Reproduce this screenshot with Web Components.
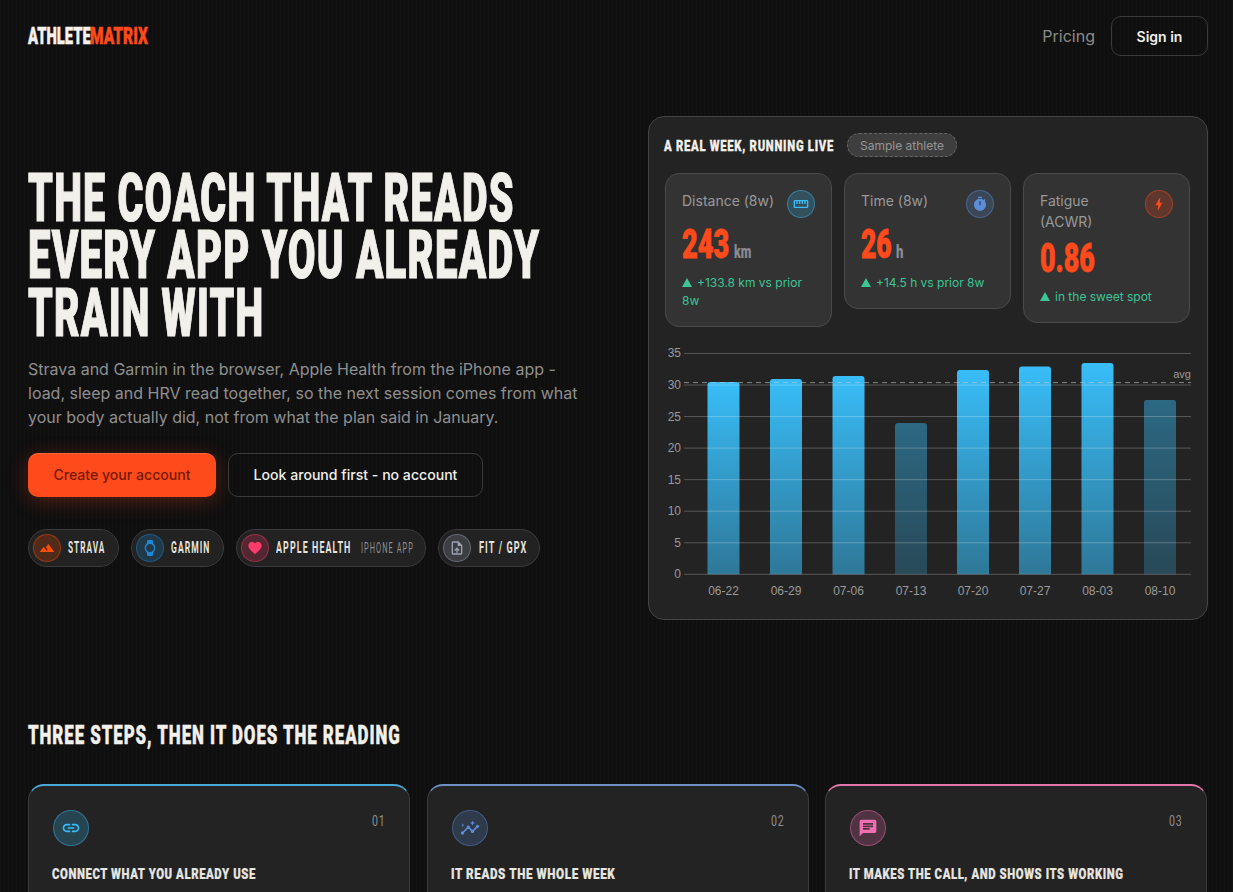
<!DOCTYPE html>
<html lang="en">
<head>
<meta charset="utf-8">
<title>AthleteMatrix</title>
<style>
html, body { margin: 0; height: 892px; overflow: hidden; }
body {
    background-color: #0f0f0f;
    background-image: repeating-linear-gradient(90deg, rgba(255,255,255,.014) 0 1px, transparent 1px 4px);
    color: #f2f0eb;
    font-family: Inter, "Liberation Sans", sans-serif;
    --display: Roboto, "Liberation Sans", sans-serif;
}
</style>
</head>
<body>
<landing-page></landing-page>

<script>
const ICONS = {
    ruler: 'M21 6H3c-1.1 0-2 .9-2 2v8c0 1.1.9 2 2 2h18c1.1 0 2-.9 2-2V8c0-1.1-.9-2-2-2zm0 10H3V8h2v4h2V8h2v4h2V8h2v4h2V8h2v4h2V8h2v8z',
    timer: 'M9 1h6v2H9zm10.03 6.39l1.42-1.42c-.43-.51-.9-.99-1.41-1.41l-1.42 1.42C16.07 4.74 14.12 4 12 4c-4.97 0-9 4.03-9 9s4.02 9 9 9 9-4.03 9-9c0-2.12-.74-4.07-1.97-5.61zM13 14h-2V8h2v6z',
    bolt: 'M11 21h-1l1-7H7.5c-.58 0-.57-.32-.38-.66.19-.34.05-.08.07-.12C8.48 10.94 10.42 7.54 13 3h1l-1 7h3.5c.49 0 .56.33.47.51l-.07.15C12.96 17.55 11 21 11 21z',
    link: 'M3.9 12c0-1.71 1.39-3.1 3.1-3.1h4V7H7c-2.76 0-5 2.24-5 5s2.24 5 5 5h4v-1.9H7c-1.71 0-3.1-1.39-3.1-3.1zM8 13h8v-2H8v2zm9-6h-4v1.9h4c1.71 0 3.1 1.39 3.1 3.1s-1.39 3.1-3.1 3.1h-4V17h4c2.76 0 5-2.24 5-5s-2.24-5-5-5z',
    insights: 'M21 8c-1.45 0-2.26 1.44-1.93 2.51l-3.55 3.56c-.3-.09-.74-.09-1.04 0l-2.55-2.55C12.27 10.45 11.46 9 10 9c-1.45 0-2.27 1.44-1.93 2.52l-4.56 4.55C2.44 15.74 1 16.55 1 18c0 1.1.9 2 2 2 1.45 0 2.26-1.44 1.93-2.51l4.55-4.56c.3.09.74.09 1.04 0l2.55 2.55C12.73 16.55 13.54 18 15 18c1.45 0 2.27-1.44 1.93-2.52l3.56-3.55C21.56 12.26 23 11.45 23 10c0-1.1-.9-2-2-2zM15 9l.94-2.07L18 6l-2.06-.93L15 3l-.92 2.07L12 6l2.08.93zM3.5 11L4 9l2-.5L4 8l-.5-2L3 8l-2 .5L3 9z',
    chat: 'M20 2H4c-1.1 0-1.99.9-1.99 2L2 22l4-4h14c1.1 0 2-.9 2-2V4c0-1.1-.9-2-2-2zM6 9h12v2H6V9zm8 5H6v-2h8v2zm4-6H6V6h12v2z',
    watch: 'M20 12c0-2.54-1.19-4.81-3.04-6.27L16 0H8l-.95 5.73C5.19 7.19 4 9.45 4 12s1.19 4.81 3.05 6.27L8 24h8l.96-5.73C18.81 16.81 20 14.54 20 12zM6 12c0-3.31 2.69-6 6-6s6 2.69 6 6-2.69 6-6 6-6-2.69-6-6z',
    heart: 'M12 21.35l-1.45-1.32C5.4 15.36 2 12.28 2 8.5 2 5.42 4.42 3 7.5 3c1.74 0 3.41.81 4.5 2.09C13.09 3.81 14.76 3 16.5 3 19.58 3 22 5.42 22 8.5c0 3.78-3.4 6.86-8.55 11.54L12 21.35z',
    upload: 'M14 2H6c-1.1 0-1.99.9-1.99 2L4 20c0 1.1.89 2 1.99 2H18c1.1 0 2-.9 2-2V8l-6-6zm4 18H6V4h7v5h5v11zM8 15.01l1.41 1.41L11 14.84V19h2v-4.16l1.59 1.59L16 15.01 12.01 11z',
    terrain: 'M14 6l-3.75 5 2.85 3.8-1.6 1.2C9.81 13.75 7 10 7 10l-6 8h22L14 6z'
};

// no condensed face is installed: squeeze the text horizontally to the width in w
class CondText extends HTMLElement {
    constructor() {
        super();
        this.attachShadow({ mode: 'open' }).innerHTML = `
<style>
:host { display: inline-block; white-space: nowrap; }
span { display: inline-block; transform-origin: 0 50%; }
</style>
<span><slot></slot></span>`;
    }

    connectedCallback() {
        const span = this.shadowRoot.querySelector('span');
        const w = parseFloat(this.getAttribute('w'));
        span.style.transform = `scaleX(${w / span.offsetWidth})`;
        this.style.width = w + 'px';
    }
}
customElements.define('cond-text', CondText);

// round tinted badge with a material style glyph
class IconBadge extends HTMLElement {
    constructor() {
        super();
        const size = this.getAttribute('size') || 28;
        const glyph = this.getAttribute('glyph') || 16;
        const color = this.getAttribute('color') || '#fff';
        this.attachShadow({ mode: 'open' }).innerHTML = `
<style>
:host {
    display: flex; flex: none; align-items: center; justify-content: center;
    width: ${size}px; height: ${size}px; box-sizing: border-box; border-radius: 50%;
    border: 1px solid color-mix(in srgb, ${color} 42%, transparent);
    background: color-mix(in srgb, ${color} 22%, transparent);
}
svg { width: ${glyph}px; height: ${glyph}px; fill: ${color}; }
</style>
<svg viewBox="0 0 24 24"><path d="${ICONS[this.getAttribute('name')]}"/></svg>`;
    }
}
customElements.define('icon-badge', IconBadge);

class TopNav extends HTMLElement {
    constructor() {
        super();
        this.attachShadow({ mode: 'open' }).innerHTML = `
<style>
:host { display: flex; align-items: center; justify-content: space-between; height: 40px; padding-top: 16px; }
.logo { display: flex; font: 900 24px/1 var(--display); color: #f4f2ee; -webkit-text-stroke: .5px currentColor; margin-left: -.5px; }
.logo .accent { color: #ff4a1c; }
.links { display: flex; align-items: center; gap: 16px; }
.pricing { font-size: 16px; color: #8c8c8c; }
.signin {
    width: 97px; height: 40px; box-sizing: border-box; display: flex; align-items: center; justify-content: center;
    border: 1px solid #3a3a3a; border-radius: 10px; font-size: 14px; font-weight: 600; color: #f2f0eb;
}
</style>
<div class="logo"><cond-text w="62.7">ATHLETE</cond-text><cond-text class="accent" w="58">MATRIX</cond-text></div>
<div class="links"><span class="pricing">Pricing</span><span class="signin">Sign in</span></div>`;
    }
}
customElements.define('top-nav', TopNav);

class SourcePill extends HTMLElement {
    constructor() {
        super();
        this.attachShadow({ mode: 'open' }).innerHTML = `
<style>
:host {
    display: flex; align-items: center; gap: 7.3px; height: 38px; box-sizing: border-box; padding: 0 12px 0 4px;
    border: 1px solid #3b3b3b; border-radius: 19px; background: #222;
    font: 700 16px/1 var(--display); letter-spacing: 2px; color: #e6e4df;
}
::slotted(.sub) { font: 400 14px/1 var(--display); letter-spacing: 2px; color: #8d8d90; margin-left: 2px; }
</style>
<slot name="icon"></slot><slot></slot>`;
    }
}
customElements.define('source-pill', SourcePill);

class HeroCopy extends HTMLElement {
    constructor() {
        super();
        this.attachShadow({ mode: 'open' }).innerHTML = `
<style>
:host { display: block; padding-top: 53.5px; }
h1 { margin: 0; font: 900 67px/57.5px var(--display); letter-spacing: 2px; color: #f2f0eb; -webkit-text-stroke: 1.2px currentColor; }
h1 cond-text { display: block; }
p { margin: 14.5px 0 0; font-size: 16px; line-height: 24px; color: #8f8f8f; width: 560px; }
.actions { display: flex; gap: 12px; margin-top: 24px; }
.btn {
    height: 44px; box-sizing: border-box; display: flex; align-items: center; justify-content: center;
    border-radius: 10px; font-size: 14.1px; font-weight: 500;
}
.primary { width: 188px; background: #ff4a1c; color: #761a06; box-shadow: 0 4px 20px rgba(255,74,28,.28), inset 0 1px 0 rgba(255,255,255,.16); }
.ghost { width: 255px; border: 1px solid #3a3a3a; color: #f2f0eb; }
.sources { display: flex; gap: 12px; margin-top: 32px; }
</style>
<h1><cond-text w="487">THE COACH THAT READS</cond-text><cond-text w="512">EVERY APP YOU ALREADY</cond-text><cond-text w="236">TRAIN WITH</cond-text></h1>
<p>Strava and Garmin in the browser, Apple Health from the iPhone app - load, sleep and HRV read together, so the next session comes from what your body actually did, not from what the plan said in January.</p>
<div class="actions"><span class="btn primary">Create your account</span><span class="btn ghost">Look around first - no account</span></div>
<div class="sources"><slot></slot></div>`;
    }
}
customElements.define('hero-copy', HeroCopy);

class StatCard extends HTMLElement {
    constructor() {
        super();
        const unit = this.getAttribute('unit');
        this.attachShadow({ mode: 'open' }).innerHTML = `
<style>
:host {
    display: block; flex: 1 1 0; min-width: 0; box-sizing: border-box; padding: 16px;
    border: 1px solid #4a4a4a; border-radius: 14px; background: #333;
}
.top { display: flex; justify-content: space-between; align-items: flex-start; gap: 8px; }
.label { font-size: 14px; line-height: 21px; color: #999; }
.value { margin-top: 7px; display: flex; align-items: baseline; gap: 4px; font: 900 40px/40px var(--display); color: #ff4a1c; -webkit-text-stroke: .8px currentColor; }
.unit { font-size: 17.5px; line-height: 1; color: #8b8b96; -webkit-text-stroke: 0; }
.delta { margin-top: 9px; font-size: 12px; line-height: 18px; color: #3cc596; }
.delta i { display: inline-block; width: 0; height: 0; margin-right: 5px; border: 5.5px solid transparent; border-top: 0; border-bottom: 9px solid #3cc596; }
</style>
<div class="top"><div class="label"><slot name="label"></slot></div><slot name="icon"></slot></div>
<div class="value"><cond-text w="${this.getAttribute('value-w')}">${this.getAttribute('value')}</cond-text>${unit ? `<cond-text class="unit" w="${this.getAttribute('unit-w')}">${unit}</cond-text>` : ''}</div>
<div class="delta"><i></i><slot></slot></div>`;
    }
}
customElements.define('stat-card', StatCard);

class WeekChart extends HTMLElement {
    constructor() {
        super();
        const bars = [
            ['06-22', 707.5, 382, 1], ['06-29', 770, 379, 1], ['07-06', 832.5, 376, 1], ['07-13', 895, 423, .45],
            ['07-20', 957, 370, 1], ['07-27', 1019, 366.5, 1], ['08-03', 1081.5, 363, 1], ['08-10', 1144, 400, .45]
        ];
        const ox = 649, oy = 340, y0 = 234.3;
        let grid = '', rects = '', labels = '';
        [35, 30, 25, 20, 15, 10, 5, 0].forEach(v => {
            const y = y0 - v * 6.31;
            grid += `<line x1="35" x2="542" y1="${y}" y2="${y}" stroke="#fff" stroke-opacity=".24"/>`;
            labels += `<text x="32" y="${y + 4}" text-anchor="end" fill="#9a9a9a">${v}</text>`;
        });
        bars.forEach(([name, x, top, op]) => {
            const rx = x - ox, ry = top - oy;
            rects += `<path d="M${rx} ${y0}V${ry + 3}q0-3 3-3h26q3 0 3 3V${y0}z" fill="url(#bar)" opacity="${op}"/>`;
            labels += `<text x="${rx + 16}" y="${y0 + 21}" text-anchor="middle" fill="#9a9a9a">${name}</text>`;
        });
        this.attachShadow({ mode: 'open' }).innerHTML = `
<style>
:host { display: block; height: 270px; margin: auto 0 9px; }
svg { display: block; width: 558px; height: 270px; font: 12px "Liberation Sans", sans-serif; }
</style>
<svg viewBox="0 0 558 270">
<defs><linearGradient id="bar" x1="0" y1="0" x2="0" y2="1"><stop offset="0" stop-color="#38bdf8"/><stop offset="1" stop-color="#38bdf8" stop-opacity=".55"/></linearGradient></defs>
${rects}${grid}
<line x1="35" x2="542" y1="42.6" y2="42.6" stroke="#c8c8c8" stroke-opacity=".6" stroke-dasharray="5 4"/>
<text x="542" y="38" text-anchor="end" font-size="11" fill="#9a9a9a">avg</text>
${labels}
</svg>`;
    }
}
customElements.define('week-chart', WeekChart);

class WeekPanel extends HTMLElement {
    constructor() {
        super();
        this.attachShadow({ mode: 'open' }).innerHTML = `
<style>
:host {
    display: flex; flex-direction: column; width: 560px; height: 504px; box-sizing: border-box; flex: none;
    border: 1px solid #444; border-radius: 16px; background: #232323; overflow: hidden;
}
.head { display: flex; align-items: center; gap: 13px; padding: 16px 16px 0 15px; height: 24px; }
.title { font: 900 15.5px/1 var(--display); letter-spacing: 1px; color: #f2f0eb; -webkit-text-stroke: .3px currentColor; margin-top: 3px; }
.chip {
    width: 110px; height: 24px; box-sizing: border-box; display: flex; align-items: center; justify-content: center;
    border: 1px dashed #666; border-radius: 12px; background: #3e3e3e; font-size: 12px; color: #959595;
}
.stats { display: flex; align-items: flex-start; gap: 12px; padding: 16px 17px 0 16px; }
</style>
<div class="head"><cond-text class="title" w="170">A REAL WEEK, RUNNING LIVE</cond-text><span class="chip">Sample athlete</span></div>
<div class="stats"><slot name="stats"></slot></div>
<slot></slot>`;
    }
}
customElements.define('week-panel', WeekPanel);

class StepCard extends HTMLElement {
    constructor() {
        super();
        const accent = this.getAttribute('accent');
        this.attachShadow({ mode: 'open' }).innerHTML = `
<style>
:host {
    display: block; height: 200px; box-sizing: border-box; padding: 24px 24px 0;
    border: 1px solid #3c3c3c; border-top: 2px solid ${accent}; border-radius: 16px; background: #232323;
}
.top { display: flex; justify-content: space-between; align-items: flex-start; }
.num { font: 400 15.5px/1 var(--display); letter-spacing: 1px; color: #8e8e8e; margin-top: 4px; }
h3 { margin: 19px 0 0 -1px; font: 900 15.5px/18px var(--display); letter-spacing: .8px; color: #e8e6e1; -webkit-text-stroke: .2px currentColor; }
</style>
<div class="top"><slot name="icon"></slot><cond-text class="num" w="13">${this.getAttribute('num')}</cond-text></div>
<h3><slot></slot></h3>`;
    }
}
customElements.define('step-card', StepCard);

class StepsSection extends HTMLElement {
    constructor() {
        super();
        this.attachShadow({ mode: 'open' }).innerHTML = `
<style>
:host { display: block; margin: 100px 1px 0 0; }
h2 { margin: 0; font: 900 25px/32px var(--display); letter-spacing: 1.4px; color: #f2f0eb; -webkit-text-stroke: .4px currentColor; }
.grid { display: grid; grid-template-columns: repeat(3, 1fr); gap: 16.5px; margin-top: 32px; }
</style>
<h2><cond-text w="373">THREE STEPS, THEN IT DOES THE READING</cond-text></h2>
<div class="grid"><slot></slot></div>`;
    }
}
customElements.define('steps-section', StepsSection);

class LandingPage extends HTMLElement {
    constructor() {
        super();
        this.attachShadow({ mode: 'open' }).innerHTML = `
<style>
:host { display: block; padding: 0 25px 0 28px; }
.hero { display: flex; justify-content: space-between; margin-top: 60px; }
</style>
<top-nav></top-nav>
<div class="hero">
    <hero-copy>
        <source-pill><icon-badge slot="icon" name="terrain" color="#fc4c02"></icon-badge><cond-text w="37.5">STRAVA</cond-text></source-pill>
        <source-pill><icon-badge slot="icon" name="watch" color="#1e88d6"></icon-badge><cond-text w="39.5">GARMIN</cond-text></source-pill>
        <source-pill><icon-badge slot="icon" name="heart" color="#ff3b6b"></icon-badge><cond-text w="75.4">APPLE HEALTH</cond-text><cond-text class="sub" w="52.7">IPHONE APP</cond-text></source-pill>
        <source-pill><icon-badge slot="icon" name="upload" color="#9aa3b2"></icon-badge><cond-text w="48.7">FIT / GPX</cond-text></source-pill>
    </hero-copy>
    <week-panel>
        <stat-card slot="stats" value="243" value-w="47.5" unit="km" unit-w="17.5"><span slot="label">Distance (8w)</span><icon-badge slot="icon" name="ruler" color="#38bdf8"></icon-badge>+133.8 km vs prior 8w</stat-card>
        <stat-card slot="stats" value="26" value-w="30.5" unit="h" unit-w="7.5"><span slot="label">Time (8w)</span><icon-badge slot="icon" name="timer" color="#5b8dd9"></icon-badge>+14.5 h vs prior 8w</stat-card>
        <stat-card slot="stats" value="0.86" value-w="55"><span slot="label">Fatigue (ACWR)</span><icon-badge slot="icon" name="bolt" color="#ff4a1c"></icon-badge>in the sweet spot</stat-card>
        <week-chart></week-chart>
    </week-panel>
</div>
<steps-section>
    <step-card num="01" accent="#4ba9d6"><icon-badge slot="icon" size="36" glyph="20" name="link" color="#38bdf8"></icon-badge><cond-text w="204">CONNECT WHAT YOU ALREADY USE</cond-text></step-card>
    <step-card num="02" accent="#6c8fc4"><icon-badge slot="icon" size="36" glyph="20" name="insights" color="#5b8dd9"></icon-badge><cond-text w="164">IT READS THE WHOLE WEEK</cond-text></step-card>
    <step-card num="03" accent="#e377ab"><icon-badge slot="icon" size="36" glyph="20" name="chat" color="#f06fb0"></icon-badge><cond-text w="274.6">IT MAKES THE CALL, AND SHOWS ITS WORKING</cond-text></step-card>
</steps-section>`;
    }
}
customElements.define('landing-page', LandingPage);
</script>
</body>
</html>
